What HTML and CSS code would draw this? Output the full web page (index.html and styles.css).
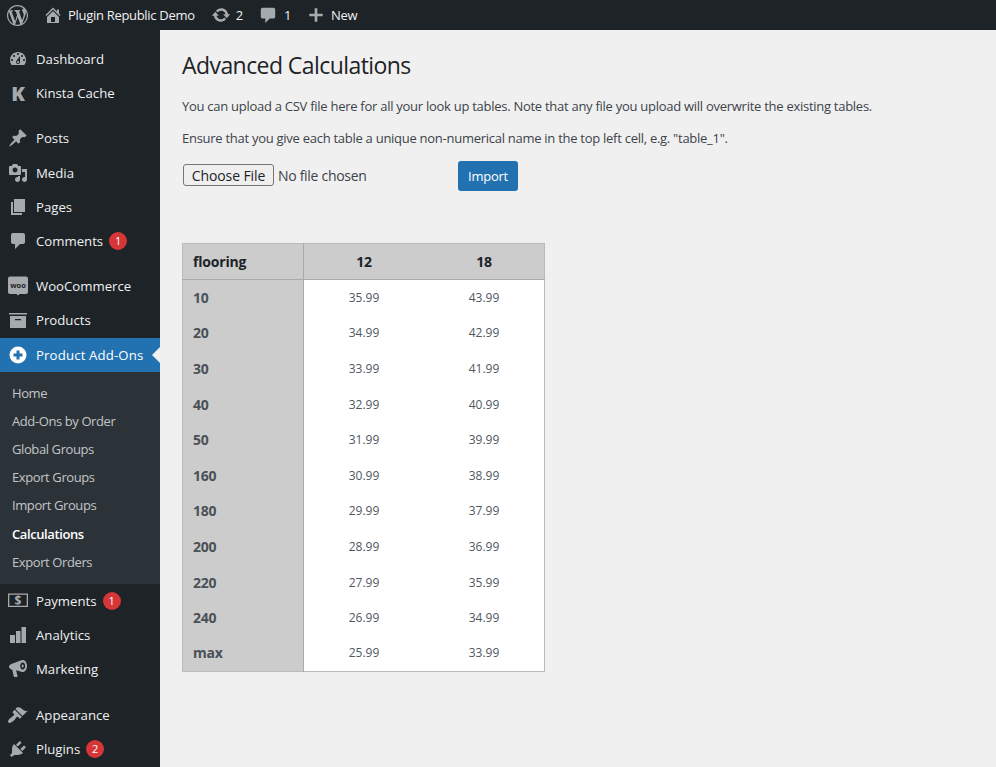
FILE: index.html
```html
<!DOCTYPE html>
<html lang="en">
<head>
    <meta charset="UTF-8">
    <meta name="viewport" content="width=device-width, initial-scale=1.0">
    <title>Advanced Calculations</title>
    <link rel="stylesheet" href="styles.css">
</head>
<body>
    <!-- Top admin bar -->
    <header class="admin-bar">
        <a class="bar-item bar-logo"><svg class="bar-icon logo-icon" viewBox="0 0 20 20"><path d="M20 10c0-5.51-4.49-10-10-10C4.48 0 0 4.49 0 10c0 5.52 4.48 10 10 10 5.51 0 10-4.48 10-10zM7.78 15.37L4.37 6.22c.55-.02 1.17-.08 1.17-.08.5-.06.44-1.13-.06-1.11 0 0-1.45.11-2.37.11-.18 0-.37 0-.58-.01C4.12 2.69 6.87 1.11 10 1.11c2.33 0 4.45.87 6.05 2.34-.68-.11-1.65.39-1.65 1.58 0 .74.45 1.36.9 2.1.35.61.55 1.36.55 2.46 0 1.49-1.4 5-1.4 5l-3.03-8.37c.54-.02.82-.17.82-.17.5-.05.44-1.25-.06-1.22 0 0-1.44.12-2.38.12-.87 0-2.33-.12-2.33-.12-.5-.03-.56 1.2-.06 1.22l.92.08 1.26 3.41zM17.41 10c.24-.64.74-1.87.43-4.25.7 1.29 1.05 2.71 1.05 4.25 0 3.29-1.73 6.24-4.4 7.78.97-2.59 1.94-5.2 2.92-7.78zM6.1 18.09C3.12 16.65 1.11 13.53 1.11 10c0-1.3.23-2.48.72-3.59C3.25 10.3 4.67 14.2 6.1 18.09zm4.03-6.63l2.58 6.98c-.86.29-1.76.45-2.71.45-.79 0-1.57-.11-2.29-.33.81-2.38 1.62-4.74 2.42-7.1z"/></svg></a>
        <a class="bar-item bar-site"><svg class="bar-icon" viewBox="0 0 20 20"><path d="M16 8.5l1.53 1.53-1.06 1.06L10 4.62l-6.47 6.47-1.06-1.06L10 2.5l4 4v-2h2v4zm-6-2.46l6 5.99V18H4v-5.97zM12 17v-5H8v5h4z"/></svg>Plugin Republic Demo</a>
        <a class="bar-item bar-updates"><svg class="bar-icon" viewBox="0 0 20 20"><path d="M10.2 3.28c3.53 0 6.43 2.61 6.92 6h2.08l-3.5 4-3.5-4h2.32c-.45-1.97-2.21-3.45-4.32-3.45-1.45 0-2.73.71-3.54 1.78L4.95 5.66C6.23 4.2 8.11 3.28 10.2 3.28zm-.4 13.44c-3.52 0-6.43-2.61-6.92-6H.8l3.5-4c1.17 1.33 2.33 2.67 3.5 4H5.48c.45 1.97 2.21 3.45 4.32 3.45 1.45 0 2.73-.71 3.54-1.78l1.71 1.95c-1.28 1.46-3.15 2.38-5.25 2.38z"/></svg>2</a>
        <a class="bar-item bar-comments"><svg class="bar-icon" viewBox="0 0 20 20"><path d="M4 2h12c1.100 0 2 .9 2 2v8c0 1.100-.9 2-2 2h-4l-5 5v-5H4c-1.100 0-2-.9-2-2V4c0-1.100.9-2 2-2z"/></svg>1</a>
        <a class="bar-item bar-new"><svg class="bar-icon" viewBox="0 0 20 20"><path d="M17.500 8.500v3h-6v6h-3v-6h-6v-3h6v-6h3v6h6z"/></svg>New</a>
    </header>

    <div class="wrap">
        <!-- Left menu -->
        <nav class="side-menu">
            <a class="menu-item"><svg class="menu-icon" viewBox="0 0 20 20"><path d="M3.76 16h12.48c1.1-1.37 1.76-3.11 1.76-5 0-4.42-3.58-8-8-8s-8 3.58-8 8c0 1.89.66 3.63 1.76 5zM10 4c.55 0 1 .45 1 1s-.45 1-1 1-1-.45-1-1 .45-1 1-1zM6 6c.55 0 1 .45 1 1s-.45 1-1 1-1-.45-1-1 .45-1 1-1zm8 0c.55 0 1 .45 1 1s-.45 1-1 1-1-.45-1-1 .45-1 1-1zm-5.37 5.55L12 7v6c0 1.1-.9 2-2 2s-2-.9-2-2c0-.57.24-1.08.63-1.45zM4 10c.55 0 1 .45 1 1s-.45 1-1 1-1-.45-1-1 .45-1 1-1zm12 0c.55 0 1 .45 1 1s-.45 1-1 1-1-.45-1-1 .45-1 1-1zm-5 3c0-.55-.45-1-1-1s-1 .45-1 1 .45 1 1 1 1-.45 1-1z" fill-rule="evenodd"/></svg>Dashboard</a>
            <a class="menu-item"><span class="kinsta-icon">K</span>Kinsta Cache</a>

            <a class="menu-item group-start"><svg class="menu-icon" viewBox="0 0 20 20"><path d="M10.44 3.02l1.82-1.82 6.36 6.35-1.83 1.82c-1.05-.68-2.48-.57-3.41.36l-.75.75c-.92.93-1.04 2.35-.35 3.41l-1.83 1.82-2.41-2.41-2.8 2.79c-.42.42-3.38 2.71-3.8 2.29s1.86-3.39 2.28-3.81l2.79-2.79L4.1 9.36l1.83-1.82c1.05.69 2.48.57 3.4-.36l.75-.75c.93-.92 1.05-2.35.36-3.41z"/></svg>Posts</a>
            <a class="menu-item"><svg class="menu-icon" viewBox="0 0 20 20"><path fill-rule="evenodd" d="M13 11V4c0-.55-.45-1-1-1h-1.67L9 1H5L3.67 3H2c-.55 0-1 .45-1 1v7c0 .55.45 1 1 1h10c.55 0 1-.45 1-1zM7 4.5c1.38 0 2.5 1.12 2.5 2.5S8.38 9.5 7 9.5 4.5 8.38 4.5 7 5.62 4.5 7 4.5zM14 6h5v10.5c0 1.38-1.12 2.5-2.5 2.5S14 17.88 14 16.5s1.12-2.5 2.5-2.5c.17 0 .34.02.5.05V9h-3V6zm-4 8.05V13h2v3.5c0 1.38-1.12 2.5-2.5 2.5S7 17.88 7 16.5 8.12 14 9.5 14c.17 0 .34.02.5.05z"/></svg>Media</a>
            <a class="menu-item"><svg class="menu-icon" viewBox="0 0 20 20"><path d="M6 15V2h11v13H6zm-1 1h9v2H3V5h2v11z"/></svg>Pages</a>
            <a class="menu-item"><svg class="menu-icon" viewBox="0 0 20 20"><path d="M5 2h10c1.1 0 2 .9 2 2v7c0 1.1-.9 2-2 2h-3l-5 5v-5H5c-1.1 0-2-.9-2-2V4c0-1.1.9-2 2-2z"/></svg>Comments<span class="badge">1</span></a>

            <a class="menu-item group-start"><svg class="menu-icon woo-icon" viewBox="0 0 20 20"><path d="M2 .5h16c1.100 0 2 .9 2 2v13.500c0 1.100-.9 2-2 2h-6.500L10 19.500 8.500 18H2c-1.100 0-2-.9-2-2V2.500c0-1.100.9-2 2-2z"/><text x="10" y="11.500" text-anchor="middle" class="woo-text">woo</text></svg>WooCommerce</a>
            <a class="menu-item"><svg class="menu-icon" viewBox="0 0 20 20"><path fill-rule="evenodd" d="M19 3v1.500H1V3h18zM2 6h16v12H2V6zm11 3H7v1.200h6V9z"/></svg>Products</a>
            <a class="menu-item menu-current"><svg class="menu-icon" viewBox="0 0 20 20"><path fill-rule="evenodd" d="M10 1.500a8.500 8.500 0 1 1 0 17 8.500 8.500 0 0 1 0-17zM8.500 5.500v3h-3v3h3v3h3v-3h3v-3h-3v-3h-3z"/></svg>Product Add-Ons</a>
            <div class="submenu">
                <a class="sub-item">Home</a>
                <a class="sub-item">Add-Ons by Order</a>
                <a class="sub-item">Global Groups</a>
                <a class="sub-item">Export Groups</a>
                <a class="sub-item">Import Groups</a>
                <a class="sub-item sub-current">Calculations</a>
                <a class="sub-item">Export Orders</a>
            </div>
            <a class="menu-item"><svg class="menu-icon" viewBox="0 0 20 20"><path fill-rule="evenodd" d="M0 2.500h20v13.500H0V2.500zm1.300 1.300v10.900h17.400V3.800H1.300z"/><text x="10" y="13.700" text-anchor="middle" class="pay-text">$</text></svg>Payments<span class="badge">1</span></a>
            <a class="menu-item"><svg class="menu-icon" viewBox="0 0 20 20"><path d="M2 10h5v8H2zM8 6h4.500v12H8zM13.500 2H18v16h-4.500z"/></svg>Analytics</a>
            <a class="menu-item"><svg class="menu-icon" viewBox="0 0 20 20"><path fill-rule="evenodd" d="M14.500 1c2.800 0 4.500 2.700 4.500 6s-1.700 6-4.500 6c-.4 0-.8-.1-1.200-.2L8 11.300l1.500 5.400c.2.700-.2 1.300-.9 1.300H6.700c-.5 0-.9-.3-1-.8L4.300 10.700C2.200 10.300 1 9.300 1 7.800c0-1.500 1.200-2.500 3-3l9.300-3.600c.4-.1.800-.2 1.200-.2zm.2 2.500c-1.500 0-2.500 1.600-2.500 3.500s1 3.500 2.500 3.500 2.500-1.600 2.500-3.500-1-3.500-2.500-3.500zm0 2c.6 0 1 .7 1 1.500s-.4 1.500-1 1.500-1-.7-1-1.500.4-1.500 1-1.500z"/></svg>Marketing</a>

            <a class="menu-item group-start"><svg class="menu-icon" viewBox="0 0 20 20"><path d="M14.480 11.060L7.410 3.990l1.500-1.500c.5-.56 2.300-.47 3.510.32 1.210.8 1.430 1.280 2.910 2.100 1.180.64 2.450 1.260 4.450.85zm-.71.71L6.700 4.700 4.930 6.470c-.39.39-.39 1.020 0 1.410l1.060 1.060c.39.39.39 1.030 0 1.420-.6.6-1.430 1.110-2.210 1.690-.35.26-.7.53-1.010.84C1.430 13.230 0 15.360 0 16.500 0 17.280.72 18 1.500 18c1.150 0 3.360-1.310 4.710-2.660.31-.31.58-.66.85-1.010.58-.78 1.090-1.610 1.690-2.210.39-.39 1.020-.39 1.410 0l1.060 1.060c.39.39 1.020.39 1.410 0z"/></svg>Appearance</a>
            <a class="menu-item"><svg class="menu-icon" viewBox="0 0 20 20"><path d="M13.110 4.360L9.870 7.600 8 5.730l3.240-3.240c.35-.34 1.050-.2 1.560.32.52.51.66 1.210.31 1.550zm-8 1.770l.91-1.120 9.010 9.010-1.190.84c-.71.71-2.630 1.160-3.820 1.160H6.140L4.900 17.260c-.59.59-1.540.59-2.120 0-.59-.58-.59-1.530 0-2.120l1.240-1.240v-3.880c0-1.130.4-3.190 1.090-3.890zm7.260 3.970l3.240-3.240c.34-.35 1.040-.21 1.550.31.52.51.66 1.210.31 1.550l-3.240 3.250z"/></svg>Plugins<span class="badge">2</span></a>
        </nav>

        <!-- Page content -->
        <main class="content">
            <h1>Advanced Calculations</h1>
            <p class="intro">You can upload a CSV file here for all your look up tables. Note that any file you upload will overwrite the existing tables.</p>
            <p>Ensure that you give each table a unique non-numerical name in the top left cell, e.g. "table_1".</p>
            <form class="import-form">
                <input type="file" class="file-input">
                <button type="button" class="btn-import">Import</button>
            </form>
            <table class="lookup">
                <thead>
                    <tr><th class="row-head">flooring</th><th>12</th><th>18</th></tr>
                </thead>
                <tbody>
                    <tr><th class="row-head">10</th><td>35.99</td><td>43.99</td></tr>
                    <tr><th class="row-head">20</th><td>34.99</td><td>42.99</td></tr>
                    <tr><th class="row-head">30</th><td>33.99</td><td>41.99</td></tr>
                    <tr><th class="row-head">40</th><td>32.99</td><td>40.99</td></tr>
                    <tr><th class="row-head">50</th><td>31.99</td><td>39.99</td></tr>
                    <tr><th class="row-head">160</th><td>30.99</td><td>38.99</td></tr>
                    <tr><th class="row-head">180</th><td>29.99</td><td>37.99</td></tr>
                    <tr><th class="row-head">200</th><td>28.99</td><td>36.99</td></tr>
                    <tr><th class="row-head">220</th><td>27.99</td><td>35.99</td></tr>
                    <tr><th class="row-head">240</th><td>26.99</td><td>34.99</td></tr>
                    <tr><th class="row-head">max</th><td>25.99</td><td>33.99</td></tr>
                </tbody>
            </table>
        </main>
    </div>
</body>
</html>
```

FILE: styles.css
```css
* {
    box-sizing: border-box;
}
html, body {
    height: 100%;
}
body {
    margin: 0;
    overflow: hidden;
    font-family: "Open Sans", "Noto Sans", Arial, sans-serif;
    font-size: 13px;
    color: #3c434a;
    background: #f0f0f0;
}
.admin-bar {
    display: flex;
    align-items: center;
    height: 30px;
    background: #1d2327;
    color: #f0f0f1;
    letter-spacing: -0.3px;
}
.bar-item {
    display: flex;
    align-items: center;
}
.bar-icon {
    width: 20px;
    height: 20px;
    margin-right: 5px;
    fill: #a7aaad;
}
.logo-icon {
    width: 21px;
    height: 21px;
    margin-right: 0;
}
.bar-logo {
    margin-left: 7px;
}
.bar-site {
    margin-left: 15px;
}
.bar-updates {
    margin-left: 16px;
}
.bar-comments {
    margin-left: 16px;
}
.bar-comments .bar-icon {
    width: 18px;
    margin-right: 7px;
}
.bar-new {
    margin-left: 16px;
}
.bar-new .bar-icon {
    width: 18px;
    margin-right: 6px;
}
.wrap {
    display: flex;
    height: calc(100% - 30px);
}
.side-menu {
    width: 160px;
    flex-shrink: 0;
    padding-top: 12px;
    background: #1d2327;
}
.menu-item {
    position: relative;
    display: flex;
    align-items: center;
    height: 34.2px;
    padding-left: 8px;
    font-size: 13.2px;
    color: #f0f0f1;
}
.group-start {
    margin-top: 11px;
}
.menu-icon {
    width: 20px;
    height: 20px;
    margin-right: 8px;
    fill: #a7aaad;
    flex-shrink: 0;
}
.woo-text {
    font-size: 7.5px;
    font-weight: 700;
    fill: #1d2327;
}
.pay-text {
    font-size: 12px;
    font-weight: 700;
    fill: #a7aaad;
}
.kinsta-icon {
    width: 20px;
    margin-right: 8px;
    text-align: center;
    font-size: 20px;
    font-weight: 800;
    color: #a7aaad;
}
.badge {
    width: 18px;
    height: 18px;
    margin-left: 6px;
    border-radius: 50%;
    background: #d63638;
    color: #fff;
    font-size: 11px;
    line-height: 18px;
    text-align: center;
}
.menu-current {
    background: #2271b1;
    color: #fff;
    letter-spacing: 0.15px;
}
.menu-current .menu-icon {
    fill: #fff;
}
.menu-current::after {
    content: "";
    position: absolute;
    right: 0;
    top: 50%;
    margin-top: -8px;
    border: 8px solid transparent;
    border-right-color: #f0f0f0;
}
.submenu {
    padding: 7px 0 8px;
    background: #2c3338;
}
.sub-item {
    display: block;
    height: 28.2px;
    padding-left: 12px;
    line-height: 28px;
    color: #c3c4c7;
    letter-spacing: -0.4px;
}
.sub-current {
    color: #fff;
    font-weight: 600;
}
.content {
    flex: 1;
    padding: 0 22px;
}
h1 {
    margin: 19px 0 0;
    font-size: 23px;
    font-weight: 400;
    line-height: 32px;
    color: #1d2327;
    letter-spacing: -0.57px;
}
p {
    margin: 15px 0 0;
    line-height: 18px;
    letter-spacing: -0.27px;
}
.intro {
    margin-top: 16px;
}
.intro + p {
    margin-top: 14px;
}
.import-form {
    display: flex;
    align-items: center;
    margin-top: 14px;
}
.file-input {
    width: 275px;
    margin: 0 0 2px 1px;
    font-family: "Open Sans", Arial, sans-serif;
    font-size: 14px;
    letter-spacing: -0.3px;
    color: #3c434a;
}
.file-input::file-selector-button {
    width: 91px;
    height: 22px;
    padding: 0;
    margin-right: 4px;
    border: 1px solid #767676;
    border-radius: 3px;
    background: #efefef;
    color: #1d2327;
    font: inherit;
    letter-spacing: -0.1px;
}
.btn-import {
    width: 60px;
    height: 30px;
    border: 0;
    border-radius: 3px;
    background: #2271b1;
    color: #fff;
    font-family: inherit;
    font-size: 13px;
    letter-spacing: -0.25px;
}
.lookup {
    width: 363px;
    margin-top: 52px;
    border-collapse: collapse;
    table-layout: fixed;
    border: 1px solid #bbb;
}
.lookup th,
.lookup td {
    height: 35.6px;
    padding: 0;
    text-align: center;
}
.lookup td {
    background: #fff;
    font-size: 12px;
    color: #50575e;
}
.lookup th {
    background: #ccc;
    font-size: 14px;
    font-weight: 700;
    letter-spacing: -0.2px;
    color: #4a5157;
}
.lookup thead th {
    height: 36px;
    color: #1d2327;
    border-bottom: 1px solid #aaa;
}
.lookup .row-head {
    width: 121px;
    padding-left: 10px;
    text-align: left;
    border-right: 1px solid #aaa;
}
```
